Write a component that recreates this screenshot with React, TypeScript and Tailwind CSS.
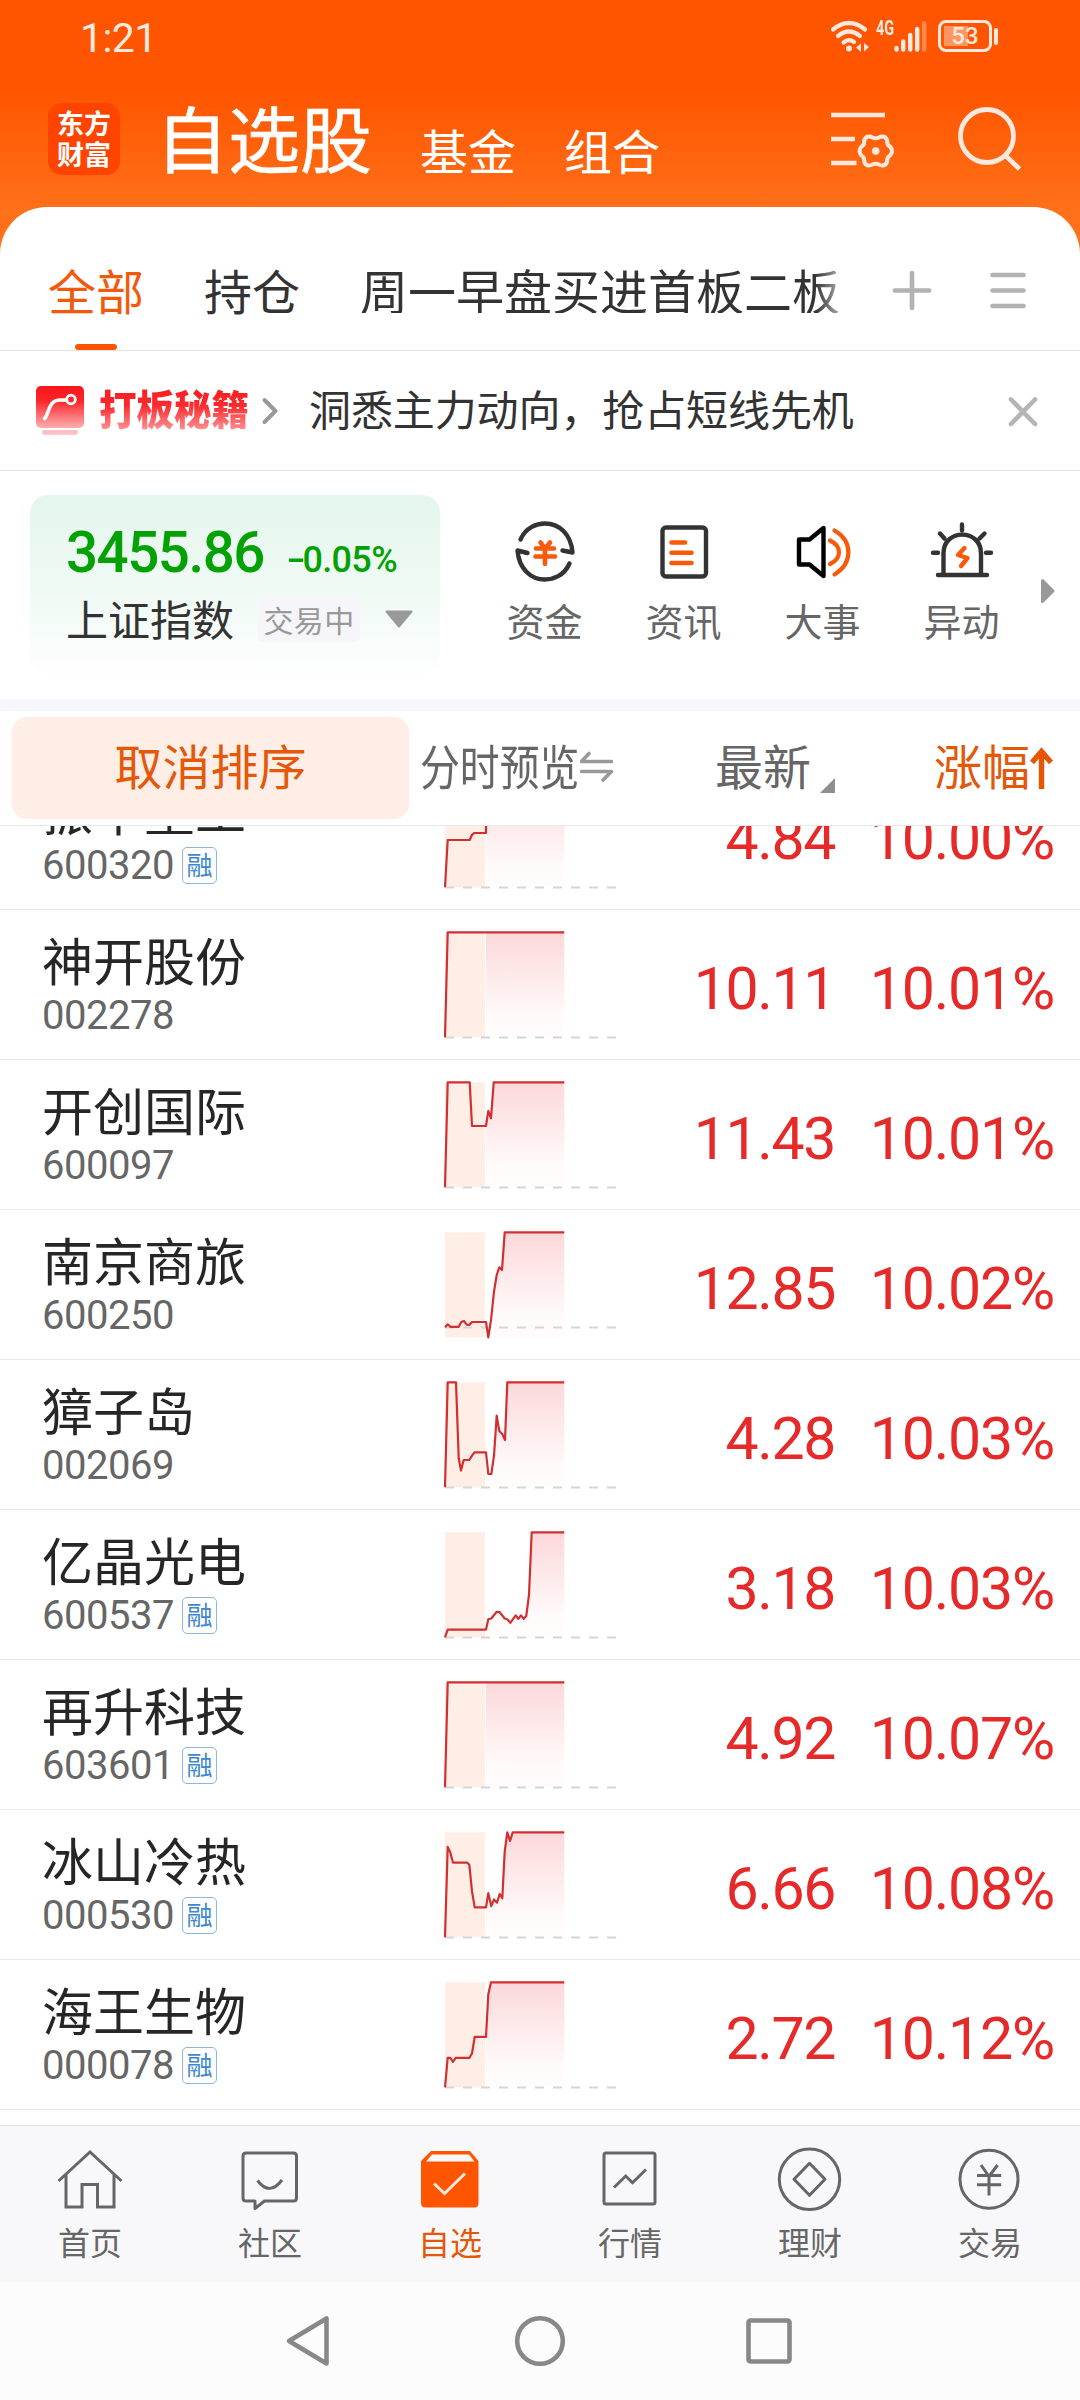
import React from "react";

type Stock = {
  name: string;
  code: string;
  margin?: boolean;
  price: string;
  change: string;
  base?: number;
  points: [number, number][];
};

const STOCKS: Stock[] = [
  {
    name: "振华重工", code: "600320", margin: true, price: "4.84", change: "10.00%",
    points: [[0, 105], [2.7, 57.7], [24.7, 57.7], [27, 52.5], [29.2, 50.7], [41, 50.7], [41.5, 0], [119.3, 0]],
  },
  {
    name: "神开股份", code: "002278", price: "10.11", change: "10.01%",
    points: [[0, 105], [2.7, 0], [119.3, 0]],
  },
  {
    name: "开创国际", code: "600097", price: "11.43", change: "10.01%",
    points: [[0, 105], [2.7, 0], [24.7, 0], [27, 43.7], [41, 43.7], [43.3, 28.5], [46, 36], [48.7, 0], [119.3, 0]],
  },
  {
    name: "南京商旅", code: "600250", price: "12.85", change: "10.02%", base: 95,
    points: [[0, 95], [2.7, 92], [5.3, 94.5], [13.7, 94.5], [16.3, 89.7], [19, 88.7], [21.7, 92.3], [24.3, 92.7], [27, 89.7], [41, 89.7], [43.3, 105], [46, 87.7], [49, 59.3], [51.7, 42.7], [54.3, 35], [57, 37.7], [59.7, 0], [119.3, 0]],
  },
  {
    name: "獐子岛", code: "002069", price: "4.28", change: "10.03%",
    points: [[0, 105], [2.7, 0], [11, 0], [13.7, 76], [16, 88.3], [18.7, 77.7], [24.3, 77.7], [27, 73.3], [29.7, 70], [41, 70], [43.3, 91.7], [46.3, 91.7], [49, 73.3], [51.7, 33.3], [54.3, 48.7], [57.3, 51.7], [60, 57.7], [62.3, 0], [119.3, 0]],
  },
  {
    name: "亿晶光电", code: "600537", margin: true, price: "3.18", change: "10.03%",
    points: [[0, 105], [2.7, 97.3], [41, 97.3], [43.3, 87], [46.3, 86.2], [51.7, 79.5], [54.7, 79.9], [59.7, 86.2], [62.3, 87], [65.3, 90.5], [70.7, 83], [73.3, 86.6], [76, 83], [78.7, 86.6], [81.3, 83.4], [84, 62.5], [86.7, 0], [119.3, 0]],
  },
  {
    name: "再升科技", code: "603601", margin: true, price: "4.92", change: "10.07%",
    points: [[0, 105], [2.7, 0], [119.3, 0]],
  },
  {
    name: "冰山冷热", code: "000530", margin: true, price: "6.66", change: "10.08%",
    points: [[0, 105], [2.7, 14.6], [5.3, 20.2], [8, 30.4], [22.3, 30.4], [24.3, 32.4], [27, 58.9], [29.7, 75.1], [41, 75.1], [43.3, 60.9], [46.3, 73.9], [49, 67.2], [52, 70.4], [54.7, 61.7], [57.3, 66], [59.7, 19.4], [62.3, 0], [65, 8.7], [67.7, 0], [119.3, 0]],
  },
  {
    name: "海王生物", code: "000078", margin: true, price: "2.72", change: "10.12%",
    points: [[0, 105], [2.7, 75.5], [5.3, 75.5], [8, 79.5], [10.7, 75.5], [24.3, 75.5], [27, 71.2], [29.7, 54.6], [41, 54.6], [43.3, 11.9], [46, 0], [119.3, 0]],
  },
];

function Sparkline({ points, base = 105 }: { points: [number, number][]; base?: number }) {
  const line = points.map((p) => p.join(",")).join(" ");
  return (
    <svg className="mt-[20px] h-[110px] w-[176px] shrink-0" viewBox="-2 -2.3 176 110" fill="none">
      <defs>
        <linearGradient id="area" x1="0" y1="0" x2="0" y2="105" gradientUnits="userSpaceOnUse">
          <stop offset="0" stopColor="#fcd8da" />
          <stop offset="0.8" stopColor="#fffafa" />
          <stop offset="1" stopColor="#fffcfc" />
        </linearGradient>
        <clipPath id="afternoon">
          <rect x="41" y="-2" width="79" height="107" />
        </clipPath>
      </defs>
      <rect x="0" y="0" width="40" height="105" fill="#feeee5" />
      <polygon points={`0,105 ${line} 119.3,105`} fill="url(#area)" clipPath="url(#afternoon)" />
      <path d={`M0 ${base + 0.2}H171.3`} stroke="#d3d5db" strokeWidth="2" strokeDasharray="9 9" />
      <polyline points={line} stroke="#d22f30" strokeWidth="2.2" strokeLinejoin="round" />
    </svg>
  );
}

function StockRow({ s }: { s: Stock }) {
  return (
    <div className="flex h-[150px] shrink-0 border-b border-[#ebebeb]">
      <div className="w-[443px] pl-[42px] pt-[23px]">
        <div className="text-[51px] leading-[52px] text-[#262626]">{s.name}</div>
        <div className="mt-[10px] flex h-[40px] items-center">
          <span className="mt-[2px] w-[140px] font-[Roboto] text-[40px] leading-[40px] tracking-[-0.5px] text-[#666]">{s.code}</span>
          {s.margin && (
            <span className="flex h-[37px] w-[35px] justify-center rounded-[5px] border-[1.5px] border-[#8db5e0] text-[26px] leading-[31px] text-[#4088cc]">
              融
            </span>
          )}
        </div>
      </div>
      <Sparkline points={s.points} base={s.base} />
      <div className="mt-[49px] w-[216px] text-right font-[Roboto] text-[59px] leading-[60px] tracking-[-1.4px] text-[#e62a2a]">{s.price}</div>
      <div className="mt-[49px] w-[219px] text-right font-[Roboto] text-[59px] leading-[60px] tracking-[-1.2px] text-[#e62a2a]">{s.change}</div>
    </div>
  );
}

function StatusBar() {
  return (
    <div className="flex h-[88px] items-start pl-[80px] text-[#ffe9de]">
      <span className="mt-[18px] w-[751px] font-[Roboto] text-[41px] leading-[41px] tracking-[-0.6px]">1:21</span>
      <svg className="mt-[16px] h-[40px] w-[40px]" viewBox="831 16 40 40" fill="none" stroke="currentColor" strokeWidth="4.2" strokeLinecap="round">
        <path d="M833 29.5Q849 16.500 865 29.500" />
        <path d="M838 36Q849 27 860 36" />
        <path d="M843.500 42.500Q849 38 854 42" />
        <circle cx="849" cy="48.500" r="3" fill="currentColor" stroke="none" />
        <path d="M861 43.500V52L856 47.500ZM864 43V51.500L869 47Z" fill="currentColor" stroke="none" />
      </svg>
      <span className="ml-[5px] mt-[18px] w-[18px] origin-left scale-x-[0.72] font-[Roboto] text-[20px] font-bold leading-[20px]">4G</span>
      <svg className="mt-[16px] h-[40px] w-[34px]" viewBox="894 16 34 40" fill="none" stroke="currentColor" strokeWidth="4.4" strokeLinecap="round">
        <path d="M896.500 48V49.500M903.200 41.500V49.500M910.200 35V49.500M917.200 29V49.500" />
        <path d="M924.200 23.500V49.500" opacity="0.35" />
      </svg>
      <div className="ml-[10px] mt-[20px] flex h-[32px] w-[54px] rounded-[8px] border-[3px] border-current bg-[linear-gradient(90deg,transparent_3px,#ff9560_3px,#ff9560_27px,transparent_27px)] bg-[length:100%_20px] bg-[position:0_3px] bg-no-repeat">
        <span className="w-full text-center font-[Roboto] text-[24px] font-medium leading-[27px]">53</span>
      </div>
      <span className="ml-[2px] mt-[28px] h-[17px] w-[4px] rounded-full bg-current" />
    </div>
  );
}

function Header() {
  return (
    <div className="flex h-[119px] items-start pl-[48px] text-white">
      <div className="mt-[15px] h-[72px] w-[72px] rounded-[14px] bg-[#ff4400] pt-[4px] text-center text-[27px] font-bold leading-[31px]">
        <div>东方</div>
        <div>财富</div>
      </div>
      <span className="ml-[36px] mt-[12px] text-[72px] leading-[72px] [-webkit-text-stroke:0.6px_#fff]">自选股</span>
      <span className="ml-[48px] mt-[37px] text-[48px] leading-[48px]">基金</span>
      <span className="ml-[48px] mt-[37px] text-[48px] leading-[48px]">组合</span>
      <svg className="ml-[169px] mt-[22px] h-[64px] w-[68px]" viewBox="829 110 68 64" fill="none" stroke="#ffe9de" strokeWidth="4.6">
        <path d="M831 115H885M831 139H855M831 163H856.500" />
        <path
          d="M884 136.600Q887.500 138.200 887.300 142.500Q887.500 145.500 890 146.500Q892 148.500 892 151Q892 153.500 890 155.500Q887.500 156.500 887.300 159.500Q887.500 163.800 884 165.400Q881 166 879 164.500Q875.700 162.800 872.400 164.500Q870.400 166 867.400 165.400Q863.900 163.800 864.100 159.500Q863.900 156.500 861.400 155.500Q859.600 153.500 859.600 151Q859.600 148.500 861.400 146.500Q863.900 145.500 864.100 142.500Q863.900 138.200 867.400 136.600Q870.400 136 872.400 137.500Q875.700 139.200 879 137.500Q881 136 884 136.600Z"
          strokeLinejoin="round"
          strokeWidth="4"
        />
        <circle cx="875.700" cy="151" r="3.800" fill="#ffe9de" stroke="none" />
      </svg>
      <svg className="ml-[60px] mt-[16px] h-[70px] w-[68px]" viewBox="957 104 68 70" fill="none" stroke="#ffe9de" strokeWidth="4.800">
        <circle cx="987" cy="136" r="26.500" />
        <path d="M1005 155L1019.500 169" />
      </svg>
    </div>
  );
}

function Tabs() {
  return (
    <div className="flex h-[144px] items-start border-b border-[#e4e4e4] pl-[48px] text-[48px] leading-[48px] text-[#333]">
      <div className="mt-[58px] flex h-[85px] w-[96px] flex-col items-center justify-between">
        <span className="text-[#f15a0c]">全部</span>
        <span className="h-[6px] w-[42px] rounded-full bg-[#ff5500]" />
      </div>
      <span className="ml-[60px] mt-[58px]">持仓</span>
      <span className="ml-[60px] mt-[58px] w-[480px] whitespace-nowrap bg-[linear-gradient(90deg,#333_455px,#aaa_480px)] bg-clip-text text-transparent">
        周一早盘买进首板二板
      </span>
      <svg className="ml-[48px] mt-[59px] h-[48px] w-[48px]" viewBox="0 0 48 48" stroke="#b2b2b2" strokeWidth="4.600" strokeLinecap="round">
        <path d="M7 24.500H41M24 7V42" />
      </svg>
      <svg className="ml-[48px] mt-[59px] h-[48px] w-[48px]" viewBox="0 0 48 48" stroke="#b2b2b2" strokeWidth="4.600" strokeLinecap="round">
        <path d="M8.500 9H39.500M8.500 24.500H39.500M8.500 40H39.500" />
      </svg>
    </div>
  );
}

function Banner() {
  return (
    <div className="flex h-[120px] items-start border-b border-[#e4e4e4] pl-[36px]">
      <svg className="mt-[34px] h-[52px] w-[48px]" viewBox="36 385 48 52" fill="none">
        <defs>
          <linearGradient id="tile" x1="0" y1="0" x2="0" y2="1">
            <stop offset="0" stopColor="#fb1519" />
            <stop offset="0.35" stopColor="#fb2529" />
            <stop offset="1" stopColor="#fdb0b1" />
          </linearGradient>
        </defs>
        <rect x="36" y="386" width="48" height="42" rx="5" fill="url(#tile)" />
        <rect x="42" y="430" width="36" height="4.800" rx="2" fill="#fcc0c2" />
        <path d="M44.500 418.500C49 415 48 400 60 400H66.500" stroke="#fff" strokeWidth="3.600" strokeLinecap="round" />
        <circle cx="71" cy="399.500" r="4.300" stroke="#fff" strokeWidth="2.800" />
      </svg>
      <span className="ml-[15px] mt-[36px] scale-y-[1.08] bg-[linear-gradient(180deg,#fa1a1e_0%,#fb2a2e_45%,#fd8f91_100%)] bg-clip-text text-[37.5px] font-black leading-[41px] text-transparent">
        打板秘籍
      </span>
      <svg className="ml-[11px] mt-[44px] h-[32px] w-[20px]" viewBox="0 0 20 32" fill="none" stroke="#999" strokeWidth="4" strokeLinecap="round" strokeLinejoin="round">
        <path d="M4.500 5L15.500 16L4.500 27" />
      </svg>
      <span className="ml-[29px] mt-[36px] w-[546px] whitespace-nowrap text-[42px] leading-[42px] tracking-[-0.1px] text-[#333]">洞悉主力动向，抢占短线先机</span>
      <svg className="ml-[152px] mt-[44px] h-[32px] w-[32px]" viewBox="0 0 32 32" stroke="#b5b5b5" strokeWidth="4.600" strokeLinecap="round">
        <path d="M4 4.500L28 29M28 4.500L4 29" />
      </svg>
    </div>
  );
}

const SHORTCUTS: { label: string; icon: React.ReactNode }[] = [
  {
    label: "资金",
    icon: (
      <>
        <path d="M7.500 19.500C13 7 24 3.500 32 3.500C46 3.500 58 14 59.500 32.500L49.500 30.500" />
        <path d="M56.500 43.500C51 56 40 59.500 32 59.500C18 59.500 6 49 4.500 30.500L14.500 33" />
        <path d="M27.500 22.500L32 29L37 22.500M23 28.500H41M22.500 36.500H42M32 29V44" stroke="#f95a0a" strokeWidth="4.600" />
      </>
    ),
  },
  {
    label: "资讯",
    icon: (
      <>
        <rect x="10.500" y="7.500" width="43.500" height="49" rx="3.500" />
        <path d="M19.500 22.500H33M19.500 32.800H39.500M19.500 43H39.500" stroke="#f95a0a" strokeWidth="4.600" />
      </>
    ),
  },
  {
    label: "大事",
    icon: (
      <>
        <path d="M8 19.500H18.500L32.500 8V56L18.500 44.500H8Z" stroke="#000" />
        <path d="M39 20.500C51 26 51 38.500 39 44M43.500 10.500C62 21 62 43.500 43.500 54.500" stroke="#f95a0a" strokeWidth="4.200" />
      </>
    ),
  },
  {
    label: "异动",
    icon: (
      <>
        <path d="M13.500 54V33C13.500 8.500 51 8.500 51 33V54M8 55H57" />
        <path d="M32 4.500V10.500M10 13.500L14.500 18.500M54.500 13.500L49.500 18.500M3 32.800H8M56 32.800H61" />
        <path d="M34.500 28L28 35L37.500 38L31 46" stroke="#f95a0a" />
      </>
    ),
  },
];

function IndexPanel() {
  return (
    <div className="flex h-[228px] items-start pl-[30px] pt-[24px]">
      <div className="h-[179px] w-[410px] rounded-[18px] bg-[linear-gradient(180deg,#e4f6ec_0%,#f0faf5_55%,#fefefe_100%)] pl-[36px] pt-[30px]">
        <div className="flex h-[56px] items-baseline font-[Roboto] font-medium text-[#04a104]">
          <span className="w-[221px] text-[56.5px] leading-[56px] tracking-[-1.5px]">3455.86</span>
          <span className="text-[36px] leading-[36px] tracking-[-0.7px]">
            <span className="inline-block origin-left scale-x-[1.5]">-</span>
            <span className="ml-[4px]">0.05%</span>
          </span>
        </div>
        <div className="mt-[15px] flex h-[46px] items-center">
          <span className="mt-[-2px] w-[192px] text-[42px] leading-[42px] text-[#333]">上证指数</span>
          <span className="h-[46px] w-[102px] rounded-[5px] bg-[#f6f6fa] text-center text-[30px] leading-[46px] tracking-[0.400px] text-[#999]">交易中</span>
          <svg className="ml-[24px] h-[20px] w-[30px]" viewBox="0 0 30 20" fill="#999" stroke="#999" strokeWidth="2" strokeLinejoin="round">
            <path d="M2.500 2.500H27.500L15 17.500Z" />
          </svg>
        </div>
      </div>
      <div className="ml-[35px] flex">
        {SHORTCUTS.map((s) => (
          <div key={s.label} className="flex w-[139px] flex-col items-center pt-[25px]">
            <svg className="h-[64px] w-[64px]" viewBox="0 0 64 64" fill="none" stroke="#333" strokeWidth="4.400" strokeLinecap="round" strokeLinejoin="round">
              {s.icon}
            </svg>
            <span className="mt-[17px] text-[38px] leading-[38px] text-[#666]">{s.label}</span>
          </div>
        ))}
      </div>
      <svg className="ml-[8px] mt-[82px] h-[28px] w-[20px]" viewBox="0 0 20 28" fill="#999" stroke="#999" strokeWidth="3" strokeLinejoin="round">
        <path d="M3.500 3.500L14 14L3.500 24.500Z" />
      </svg>
    </div>
  );
}

function SortHeader() {
  return (
    <div className="flex h-[115px] items-start border-b border-[#e9e9e9] pl-[12px] text-[48px] leading-[48px] text-[#666]">
      <div className="mt-[6px] h-[102px] w-[397px] rounded-[15px] bg-[#feeee5] pt-[23px] text-center text-[#e4580a]">取消排序</div>
      <span className="ml-[11px] mt-[29px] w-[158px] origin-left scale-x-[0.83] whitespace-nowrap">分时预览</span>
      <svg className="mt-[38px] h-[36px] w-[38px]" viewBox="0 0 38 36" fill="none" stroke="#999" strokeWidth="3.600" strokeLinecap="round" strokeLinejoin="round">
        <path d="M33.500 12.500H3.500L11 4.500M3.500 22.500H33.500L25 31" />
      </svg>
      <span className="ml-[99px] mt-[29px]">最新</span>
      <svg className="ml-[9px] mt-[67px] h-[15px] w-[15px]" viewBox="0 0 15 15" fill="#8e8e93">
        <path d="M15 0V15H0Z" />
      </svg>
      <span className="ml-[99px] mt-[29px] text-[#e4580a]">涨幅</span>
      <svg className="mt-[36px] h-[43px] w-[24px]" viewBox="0 0 24 43" fill="none" stroke="#ea5504" strokeWidth="5.400">
        <path d="M11.500 42V6M2 15.500L11.500 4.500L21 15.500" />
      </svg>
    </div>
  );
}

const NAV: { label: string; active?: boolean; icon: React.ReactNode }[] = [
  {
    label: "首页",
    icon: <path d="M4.500 38L36 9L67.500 38M12 31V64H28V41.500H43.500V64H60V31" strokeLinejoin="miter" />,
  },
  {
    label: "社区",
    icon: (
      <>
        <path d="M12 10H59.500Q62.500 10 62.500 13V55Q62.500 58 59.500 58H30.500L21 65.500V58H12Q9 58 9 55V13Q9 10 12 10Z" />
        <path d="M23.500 37.500Q35.500 53.500 48 37" />
      </>
    ),
  },
  {
    label: "自选",
    active: true,
    icon: (
      <>
        <path d="M17 8H56L64.500 18V60Q64.500 64.500 60 64.500H11.500Q7 64.500 7 60V18Z" fill="#ff5500" stroke="none" />
        <path d="M18 11.500H55L60.500 18.500H12Z" fill="#f8f8fa" stroke="none" />
        <path d="M20 40.500L30.500 50.500L51 30.500" stroke="#ffe9de" strokeLinejoin="miter" />
      </>
    ),
  },
  {
    label: "行情",
    icon: (
      <>
        <rect x="10" y="10" width="51" height="51" rx="2" />
        <path d="M20 44.500L31.700 33L38.500 39.700L52 26.500" strokeLinejoin="miter" />
      </>
    ),
  },
  {
    label: "理财",
    icon: (
      <>
        <circle cx="35.500" cy="36.300" r="30.200" />
        <path d="M35.500 20.300L51 36.300L35.500 52.300L20 36.300Z" />
      </>
    ),
  },
  {
    label: "交易",
    icon: (
      <>
        <circle cx="35" cy="36.200" r="29" />
        <path d="M27 22L35 33.500L43.500 22M23 32.400H47.200M23 41.700H47.200M35 33V52.500" />
      </>
    ),
  },
];

function BottomNav() {
  return (
    <div className="flex h-[157px] shrink-0 border-t border-[#e2e2e2] bg-[#f8f8fa]">
      {NAV.map((n) => (
        <div key={n.label} className="flex w-[180px] flex-col items-center pt-[17px]">
          <svg className="h-[72px] w-[72px]" viewBox="0 0 72 72" fill="none" stroke="#666" strokeWidth="3" strokeLinejoin="round">
            {n.icon}
          </svg>
          <span className={n.active ? "mt-[10px] text-[32px] leading-[32px] text-[#e4580a]" : "mt-[10px] text-[32px] leading-[32px] text-[#666]"}>{n.label}</span>
        </div>
      ))}
    </div>
  );
}

function SystemNav() {
  return (
    <div className="flex h-[118px] shrink-0 items-start justify-center gap-[173px] bg-[#fcfcfc] pt-[31px]">
      <svg className="h-[56px] w-[56px]" viewBox="0 0 56 56" fill="none" stroke="#888" strokeWidth="4.600" strokeLinejoin="round">
        <path d="M43.500 5.500V50.500L6 28Z" />
      </svg>
      <svg className="h-[56px] w-[56px]" viewBox="0 0 56 56" fill="none" stroke="#888" strokeWidth="4.600">
        <circle cx="28" cy="28" r="22.800" />
      </svg>
      <svg className="h-[56px] w-[56px]" viewBox="0 0 56 56" fill="none" stroke="#888" strokeWidth="4.600">
        <rect x="7.500" y="7.500" width="41" height="41" rx="2" />
      </svg>
    </div>
  );
}

export default function App() {
  return (
    <div className="flex h-[2400px] w-[1080px] flex-col overflow-hidden bg-[linear-gradient(180deg,#ff5500_0px,#ff5500_90px,#ff7019_210px)] font-['Noto_Sans_CJK_SC',sans-serif]">
      <StatusBar />
      <Header />
      <div className="flex min-h-0 flex-1 flex-col rounded-t-[47px] bg-white">
        <Tabs />
        <Banner />
        <IndexPanel />
        <div className="h-[12px] shrink-0 bg-[#f6f7fa]" />
        <SortHeader />
        <div className="min-h-0 flex-1 overflow-hidden">
          <div className="mt-[-66px] flex flex-col">
            {STOCKS.map((s) => (
              <StockRow key={s.code} s={s} />
            ))}
          </div>
        </div>
      </div>
      <BottomNav />
      <SystemNav />
    </div>
  );
}
